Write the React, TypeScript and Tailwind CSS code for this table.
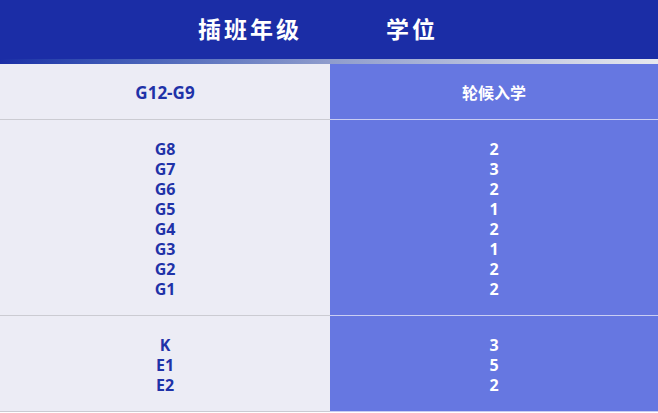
import React from "react";

const rows = [
  { h: "h-[56px]", grades: ["G12-G9"], seats: ["轮候入学"], small: true },
  { h: "h-[196px]", grades: ["G8", "G7", "G6", "G5", "G4", "G3", "G2", "G1"], seats: ["2", "3", "2", "1", "2", "1", "2", "2"] },
  { h: "h-[96px]", grades: ["K", "E1", "E2"], seats: ["3", "5", "2"] },
];

export default function App() {
  return (
    <div className="w-[658px] h-[413px] bg-white font-['Open_Sans','Noto_Sans_CJK_SC',sans-serif] font-bold">
      <div className="h-[59px] bg-[#1b2da6] flex items-center justify-center gap-[84px] pr-[22px] text-white text-[23px] tracking-[3px]">
        <span>插班年级</span>
        <span>学位</span>
      </div>
      <div className="h-[5px] bg-gradient-to-r from-[#1b2da6] via-[#8f9ccc] to-[#e8e9ee]" />
      {rows.map((r, i) => (
        <div key={i} className={`flex ${r.h}`}>
          <div className="w-[330px] bg-[#ececf5] border-b border-[#cbcbd2] flex flex-col items-center justify-center pt-[2px] text-[#1f32a8] text-[16px] leading-[20px]">
            {r.grades.map((g) => (
              <span key={g} className={r.small ? "text-[17px]" : ""}>{g}</span>
            ))}
          </div>
          <div className="flex-1 bg-[#6677e1] border-b border-[#c9cef3] flex flex-col items-center justify-center pt-[2px] text-white text-[16px] leading-[20px]">
            {r.seats.map((s, j) => (
              <span key={j} className={r.small ? "text-[16px]" : ""}>{s}</span>
            ))}
          </div>
        </div>
      ))}
    </div>
  );
}
